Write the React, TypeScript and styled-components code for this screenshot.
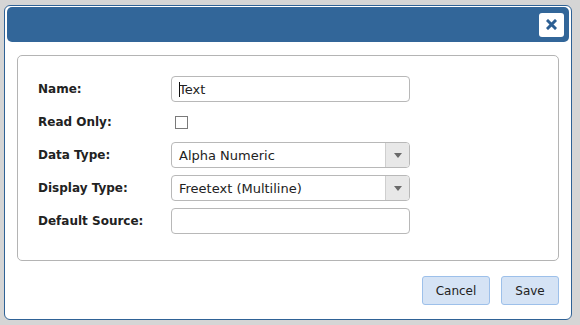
import styled, { createGlobalStyle } from "styled-components";

const GlobalStyle = createGlobalStyle`
  html, body {
    margin: 0;
    padding: 0;
    background: #d5d5d5;
    font-family: "DejaVu Sans", Verdana, sans-serif;
    color: #222;
  }
`;

const Page = styled.div`
  width: 580px;
  height: 325px;
  padding: 5px 0 0 4px;
  box-sizing: border-box;
`;

const Dialog = styled.div`
  width: 568px;
  height: 315px;
  box-sizing: border-box;
  background: #fff;
  border: 1px solid #2f6296;
  border-radius: 6px;
  padding: 1px 2px 2px 2px;
  display: flex;
  flex-direction: column;
`;

const TitleBar = styled.div`
  height: 37px;
  background: #326699;
  border-radius: 5px;
  display: flex;
  align-items: center;
  justify-content: flex-end;
  padding-right: 5px;
`;

const CloseButton = styled.button`
  width: 25px;
  height: 24px;
  border: none;
  border-radius: 3px;
  background: #fff;
  padding: 0;
  display: flex;
  align-items: center;
  justify-content: center;
  cursor: pointer;
`;

const Body = styled.div`
  flex: 1;
  display: flex;
  flex-direction: column;
  padding: 13px 10px 12px 10px;
`;

const Panel = styled.div`
  height: 206px;
  box-sizing: border-box;
  border: 1px solid #b4b4b4;
  border-radius: 5px;
  padding: 20px 20px 0 20px;
  display: grid;
  grid-template-columns: 133px 239px;
  grid-auto-rows: 26px;
  row-gap: 7px;
  align-items: center;
`;

const Label = styled.label`
  font-size: 12px;
  font-weight: bold;
  color: #222;
`;

const Field = styled.div`
  position: relative;
  height: 26px;
  display: flex;
  align-items: center;
`;

const TextInput = styled.input`
  width: 100%;
  height: 26px;
  box-sizing: border-box;
  border: 1px solid #b8b8b8;
  border-radius: 4px;
  padding: 0 7px;
  font-family: "DejaVu Sans", Verdana, sans-serif;
  font-size: 13px;
  color: #222;
  outline: none;
`;

const Caret = styled.span`
  position: absolute;
  left: 8px;
  top: 6px;
  width: 1px;
  height: 15px;
  background: #111;
`;

const CheckBox = styled.span`
  width: 13px;
  height: 13px;
  box-sizing: border-box;
  border: 1px solid #7a7a7a;
  margin-left: 4px;
  background: #fff;
`;

const Select = styled.div`
  width: 100%;
  height: 26px;
  box-sizing: border-box;
  border: 1px solid #b8b8b8;
  border-radius: 4px;
  display: flex;
  overflow: hidden;
`;

const SelectValue = styled.div`
  flex: 1;
  display: flex;
  align-items: center;
  padding: 0 7px;
  font-size: 13px;
  color: #222;
`;

const SelectArrow = styled.div`
  width: 23px;
  background: #e8e8e8;
  border-left: 1px solid #cfcfcf;
  display: flex;
  align-items: center;
  justify-content: center;
  &::after {
    content: "";
    border-left: 4px solid transparent;
    border-right: 4px solid transparent;
    border-top: 5px solid #6a6a6a;
  }
`;

const Footer = styled.div`
  display: flex;
  justify-content: flex-end;
  gap: 11px;
  margin-top: 15px;
`;

const Button = styled.button<{ $w: number }>`
  width: ${(p) => p.$w}px;
  height: 29px;
  background: #d5e3f5;
  border: 1px solid #9dc0ea;
  border-radius: 3px;
  font-family: "DejaVu Sans", Verdana, sans-serif;
  font-size: 12px;
  color: #222;
  cursor: pointer;
`;

const CloseIcon = () => (
  <svg width="11" height="11" viewBox="0 0 11 11">
    <path
      d="M2 2 L9 9 M9 2 L2 9"
      stroke="#2d5f93"
      strokeWidth="3"
      strokeLinecap="square"
    />
  </svg>
);

export default function App() {
  return (
    <Page>
      <GlobalStyle />
      <Dialog>
        <TitleBar>
          <CloseButton aria-label="Close">
            <CloseIcon />
          </CloseButton>
        </TitleBar>
        <Body>
          <Panel>
            <Label>Name:</Label>
            <Field>
              <TextInput defaultValue="Text" />
              <Caret />
            </Field>

            <Label>Read Only:</Label>
            <Field>
              <CheckBox />
            </Field>

            <Label>Data Type:</Label>
            <Select>
              <SelectValue>Alpha Numeric</SelectValue>
              <SelectArrow />
            </Select>

            <Label>Display Type:</Label>
            <Select>
              <SelectValue>Freetext (Multiline)</SelectValue>
              <SelectArrow />
            </Select>

            <Label>Default Source:</Label>
            <Field>
              <TextInput />
            </Field>
          </Panel>
          <Footer>
            <Button $w={68}>Cancel</Button>
            <Button $w={58}>Save</Button>
          </Footer>
        </Body>
      </Dialog>
    </Page>
  );
}
